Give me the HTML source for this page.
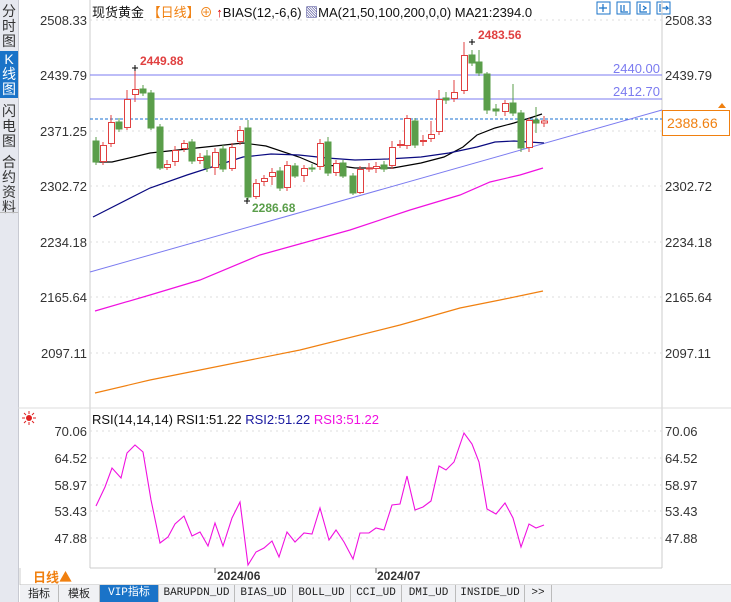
<!DOCTYPE html><html><head><meta charset="utf-8"><style>
body{margin:0;width:731px;height:602px;overflow:hidden;background:#fff;font-family:"Liberation Sans","Noto Sans CJK SC",sans-serif;position:relative}
.side{position:absolute;left:0;top:0;width:18px;height:602px;background:#e6e8ef;border-right:1px solid #c8cad2}
.tab{position:absolute;left:0;width:18px;font-size:14px;line-height:15px;text-align:center;color:#333}
.lab{position:absolute;font-size:12px;color:#333}
.bt{position:absolute;top:585px;height:17px;font-size:11px;line-height:17px;border-right:1px solid #bbb;text-align:center;color:#222;font-family:"Liberation Mono","Noto Sans CJK SC",monospace}
</style></head><body>
<div class="side"></div>
<div class="tab" style="top:4px">分<br>时<br>图</div>
<div class="tab" style="top:51px;height:46px;background:#1a73c8;color:#fff;padding-top:1px">K<br>线<br>图</div>
<div class="tab" style="top:104px">闪<br>电<br>图</div>
<div class="tab" style="top:155px">合<br>约<br>资<br>料</div>
<div style="position:absolute;left:0;top:212px;width:18px;height:1px;background:#bbb"></div>
<div class="lab" style="left:92px;top:2px;font-size:13px;color:#111">现货黄金 <span style="color:#f08010">【日线】</span><span style="color:#f08010">⊕</span> <span style="color:#d00">↑</span>BIAS(12,-6,6) <span style="color:#338">▧</span>MA(21,50,100,200,0,0) MA21:2394.0</div>
<svg width="731" height="602" style="position:absolute;left:0;top:0" font-family="Liberation Sans" font-size="13">
<g fill="#fff" stroke="#1a73c8"><rect x="597" y="2" width="13" height="12"/><rect x="617" y="2" width="13" height="12"/><rect x="637" y="2" width="13" height="12"/><rect x="657" y="2" width="13" height="12"/></g>
<g stroke="#1a73c8" stroke-width="1.2" fill="none"><path d="M603 4v8M599 8h8M621 5v7h7M624 5v6M640 4v8h7M643 6l3 2-3 2M660 4v8M662 8h6l-2-2M666 10l2-2"/></g>
<line x1="90" y1="0" x2="90" y2="568" stroke="#ccc"/><line x1="662" y1="0" x2="662" y2="568" stroke="#ccc"/>
<line x1="18" y1="408" x2="731" y2="408" stroke="#ddd"/>
<g stroke="#ddd" stroke-dasharray="2,4"><line x1="90" y1="20" x2="662" y2="20"/><line x1="90" y1="131" x2="662" y2="131"/><line x1="90" y1="186" x2="662" y2="186"/><line x1="90" y1="242" x2="662" y2="242"/><line x1="90" y1="297" x2="662" y2="297"/><line x1="90" y1="353" x2="662" y2="353"/>
<line x1="90" y1="431" x2="662" y2="431"/><line x1="90" y1="458" x2="662" y2="458"/><line x1="90" y1="485" x2="662" y2="485"/><line x1="90" y1="511" x2="662" y2="511"/><line x1="90" y1="538" x2="662" y2="538"/></g>
<g fill="#333" text-anchor="end"><text x="87" y="25">2508.33</text><text x="87" y="80">2439.79</text><text x="87" y="136">2371.25</text><text x="87" y="191">2302.72</text><text x="87" y="247">2234.18</text><text x="87" y="302">2165.64</text><text x="87" y="358">2097.11</text>
<text x="87" y="436">70.06</text><text x="87" y="463">64.52</text><text x="87" y="490">58.97</text><text x="87" y="516">53.43</text><text x="87" y="543">47.88</text></g>
<g fill="#333"><text x="665" y="25">2508.33</text><text x="665" y="80">2439.79</text><text x="665" y="191">2302.72</text><text x="665" y="247">2234.18</text><text x="665" y="302">2165.64</text><text x="665" y="358">2097.11</text>
<text x="665" y="436">70.06</text><text x="665" y="463">64.52</text><text x="665" y="490">58.97</text><text x="665" y="516">53.43</text><text x="665" y="543">47.88</text></g>
<line x1="90" y1="75" x2="662" y2="75" stroke="#7b7bf0"/><line x1="90" y1="99" x2="662" y2="99" stroke="#7b7bf0"/>
<text x="660" y="73" fill="#7b7bf0" text-anchor="end">2440.00</text><text x="660" y="96" fill="#7b7bf0" text-anchor="end">2412.70</text>
<line x1="90" y1="119" x2="662" y2="119" stroke="#1a6fd0" stroke-dasharray="3,2"/>
<line x1="90" y1="272" x2="662" y2="110" stroke="#7b7bf0"/>
<rect x="662.5" y="110.5" width="67" height="25" fill="#fff" stroke="#f08010"/><text x="667" y="128" fill="#f08010" font-size="14">2388.66</text>
<path d="M718 108l4-5 4 5z" fill="#f08010"/>
<g fill="none" stroke-width="1.2">
<polyline stroke="#000" points="96,162 112,162 150,153 215,146 243,143 266,146 299,157 318,165 341,166 355,168 374,168 393,168 421,163 444,157 463,147 477,135 495,128 514,123 533,117 542,114"/>
<polyline stroke="#0a0a80" points="93,217 150,188 187,175 243,157 271,154 299,155 327,158 355,160 388,159 421,157 449,153 477,147 495,142 514,141 544,143"/>
<polyline stroke="#f010e0" points="95,311 150,295 200,280 260,255 350,230 410,210 460,195 490,182 520,175 543,168"/>
<polyline stroke="#f08010" points="95,393 150,380 200,370 300,350 400,325 460,308 500,300 543,291"/>
</g>
<g stroke-width="1">
<g stroke="#5a9e4a" fill="#5a9e4a"><line x1="96" y1="137" x2="96" y2="165"/><rect x="93" y="141" width="6" height="21"/>
<line x1="119" y1="118" x2="119" y2="132"/><rect x="116" y="122" width="6" height="7"/>
<line x1="143" y1="85" x2="143" y2="96"/><rect x="140" y="89" width="6" height="4"/>
<line x1="151" y1="90" x2="151" y2="130"/><rect x="148" y="93" width="6" height="35"/>
<line x1="160" y1="124" x2="160" y2="170"/><rect x="157" y="127" width="6" height="41"/>
<line x1="192" y1="139" x2="192" y2="164"/><rect x="189" y="142" width="6" height="19"/>
<line x1="207" y1="150" x2="207" y2="172"/><rect x="204" y="156" width="6" height="12"/>
<line x1="223" y1="145" x2="223" y2="172"/><rect x="220" y="149" width="6" height="20"/>
<line x1="248" y1="120" x2="248" y2="200"/><rect x="245" y="128" width="6" height="69"/>
<line x1="280" y1="167" x2="280" y2="191"/><rect x="277" y="171" width="6" height="17"/>
<line x1="295" y1="163" x2="295" y2="178"/><rect x="292" y="166" width="6" height="10"/>
<line x1="312" y1="164" x2="312" y2="172"/><rect x="309" y="168" width="6" height="1"/>
<line x1="328" y1="137" x2="328" y2="176"/><rect x="325" y="142" width="6" height="31"/>
<line x1="343" y1="160" x2="343" y2="178"/><rect x="340" y="163" width="6" height="13"/>
<line x1="353" y1="173" x2="353" y2="195"/><rect x="350" y="176" width="6" height="17"/>
<line x1="384" y1="161" x2="384" y2="172"/><rect x="381" y="165" width="6" height="4"/>
<line x1="415" y1="118" x2="415" y2="148"/><rect x="412" y="121" width="6" height="24"/>
<line x1="446" y1="92" x2="446" y2="104"/><rect x="443" y="98" width="6" height="2"/>
<line x1="472" y1="50" x2="472" y2="66"/><rect x="469" y="55" width="6" height="8"/>
<line x1="479" y1="50" x2="479" y2="76"/><rect x="476" y="62" width="6" height="11"/>
<line x1="487" y1="72" x2="487" y2="114"/><rect x="484" y="74" width="6" height="36"/>
<line x1="496" y1="104" x2="496" y2="116"/><rect x="493" y="109" width="6" height="2"/>
<line x1="513" y1="84" x2="513" y2="116"/><rect x="510" y="103" width="6" height="10"/>
<line x1="521" y1="110" x2="521" y2="152"/><rect x="518" y="113" width="6" height="35"/>
<line x1="536" y1="107" x2="536" y2="133"/><rect x="533" y="120" width="6" height="3"/></g>
<g stroke="#e04040" fill="#fff"><line x1="103" y1="142" x2="103" y2="165"/><rect x="100.5" y="145.5" width="6" height="16"/>
<line x1="111" y1="115" x2="111" y2="147"/><rect x="108.5" y="122.5" width="6" height="21"/>
<line x1="127" y1="90" x2="127" y2="130"/><rect x="124.5" y="99.5" width="6" height="28"/>
<line x1="135" y1="68" x2="135" y2="102"/><rect x="132.5" y="89.5" width="6" height="5"/>
<line x1="167" y1="160" x2="167" y2="170"/><rect x="164.5" y="164.5" width="6" height="3"/>
<line x1="175" y1="146" x2="175" y2="166"/><rect x="172.5" y="150.5" width="6" height="11"/>
<line x1="184" y1="140" x2="184" y2="152"/><rect x="181.5" y="143.5" width="6" height="5"/>
<line x1="200" y1="153" x2="200" y2="164"/><rect x="197.5" y="157.5" width="6" height="3"/>
<line x1="215" y1="148" x2="215" y2="175"/><rect x="212.5" y="152.5" width="6" height="15"/>
<line x1="232" y1="143" x2="232" y2="171"/><rect x="229.5" y="147.5" width="6" height="21"/>
<line x1="240" y1="126" x2="240" y2="145"/><rect x="237.5" y="130.5" width="6" height="11"/>
<line x1="256" y1="179" x2="256" y2="199"/><rect x="253.5" y="183.5" width="6" height="13"/>
<line x1="264" y1="175" x2="264" y2="186"/><rect x="261.5" y="178.5" width="6" height="3"/>
<line x1="272" y1="168" x2="272" y2="185"/><rect x="269.5" y="172.5" width="6" height="4"/>
<line x1="287" y1="161" x2="287" y2="191"/><rect x="284.5" y="165.5" width="6" height="22"/>
<line x1="304" y1="165" x2="304" y2="182"/><rect x="301.5" y="168.5" width="6" height="7"/>
<line x1="320" y1="139" x2="320" y2="170"/><rect x="317.5" y="143.5" width="6" height="23"/>
<line x1="336" y1="160" x2="336" y2="176"/><rect x="333.5" y="163.5" width="6" height="9"/>
<line x1="360" y1="166" x2="360" y2="194"/><rect x="357.5" y="169.5" width="6" height="23"/>
<line x1="369" y1="163" x2="369" y2="172"/><rect x="366.5" y="168" width="6" height="1"/>
<line x1="376" y1="162" x2="376" y2="173"/><rect x="373.5" y="166.5" width="6" height="2"/>
<line x1="392" y1="141" x2="392" y2="169"/><rect x="389.5" y="147.5" width="6" height="18"/>
<line x1="400" y1="140" x2="400" y2="148"/><rect x="397.5" y="144.5" width="6" height="1"/>
<line x1="407" y1="115" x2="407" y2="149"/><rect x="404.5" y="118.5" width="6" height="27"/>
<line x1="423" y1="135" x2="423" y2="146"/><rect x="420.5" y="140.5" width="6" height="1"/>
<line x1="431" y1="121" x2="431" y2="142"/><rect x="428.5" y="134.5" width="6" height="4"/>
<line x1="439" y1="90" x2="439" y2="135"/><rect x="436.5" y="99.5" width="6" height="32"/>
<line x1="454" y1="80" x2="454" y2="102"/><rect x="451.5" y="92.5" width="6" height="6"/>
<line x1="464" y1="42" x2="464" y2="94"/><rect x="461.5" y="55.5" width="6" height="35"/>
<line x1="505" y1="100" x2="505" y2="116"/><rect x="502.5" y="103.5" width="6" height="8"/>
<line x1="529" y1="118" x2="529" y2="152"/><rect x="526.5" y="120.5" width="6" height="27"/>
<line x1="544" y1="116" x2="544" y2="127"/><rect x="541.5" y="121" width="6" height="2"/></g>
</g>
<path d="M132 68h6M135 65v6M244 201h6M247 198v6M469 42h6M472 39v6" stroke="#000"/>
<text x="140" y="65" fill="#e04040" font-weight="bold" font-size="12">2449.88</text>
<text x="478" y="39" fill="#e04040" font-weight="bold" font-size="12">2483.56</text>
<text x="252" y="212" fill="#5a9e4a" font-weight="bold" font-size="12">2286.68</text>
<circle cx="29" cy="418" r="3" fill="#e02020"/><path d="M29 411v3M29 422v3M22 418h3M33 418h3M24 413l2 2M32 421l2 2M34 413l-2 2M26 421l-2 2" stroke="#e02020"/>
<text x="92" y="424" fill="#111">RSI(14,14,14) RSI1:51.22 <tspan fill="#1a1aa0">RSI2:51.22</tspan> <tspan fill="#f010e0">RSI3:51.22</tspan></text>
<polyline fill="none" stroke="#f010e0" stroke-width="1.1" points="96,506 105,487 112,468 121,478 127,453 135,445 143,452 151,500 160,543 168,537 175,524 184,516 192,536 200,532 208,546 215,523 223,546 232,518 240,502 248,565 256,552 264,548 272,541 279,557 287,532 295,542 304,533 312,534 320,508 329,540 336,530 344,542 353,559 360,533 369,533 376,528 384,530 392,505 400,504 407,476 415,510 423,507 431,501 439,466 446,470 454,462 464,433 472,444 479,462 487,509 496,514 505,503 513,518 521,547 529,524 536,528 544,525"/>
<line x1="90" y1="568" x2="662" y2="568" stroke="#ccc"/>
<line x1="215" y1="568" x2="215" y2="573" stroke="#666"/><line x1="376" y1="568" x2="376" y2="573" stroke="#666"/>
<text x="217" y="580" fill="#333" font-weight="bold" font-size="12">2024/06</text><text x="377" y="580" fill="#333" font-weight="bold" font-size="12">2024/07</text>
<text x="33" y="582" fill="#f08010" font-weight="bold" font-size="13" font-family="Noto Sans CJK SC">日线▲</text>
<line x1="20" y1="568" x2="20" y2="585" stroke="#ccc"/><line x1="20" y1="585" x2="731" y2="585" stroke="#bbb"/>
</svg>
<div style="position:absolute;left:20px;top:585px;width:711px;height:17px;background:#f0f1f4"></div>
<div class="bt" style="left:20px;width:38px;font-family:'Noto Sans CJK SC'">指标</div>
<div class="bt" style="left:59px;width:40px;font-family:'Noto Sans CJK SC'">模板</div>
<div class="bt" style="left:100px;width:58px;background:#1a73c8;color:#fff">VIP指标</div>
<div class="bt" style="left:159px;width:75px">BARUPDN_UD</div>
<div class="bt" style="left:235px;width:57px">BIAS_UD</div>
<div class="bt" style="left:293px;width:57px">BOLL_UD</div>
<div class="bt" style="left:351px;width:50px">CCI_UD</div>
<div class="bt" style="left:402px;width:53px">DMI_UD</div>
<div class="bt" style="left:456px;width:68px">INSIDE_UD</div>
<div class="bt" style="left:525px;width:26px">&gt;&gt;</div>
</body></html>
